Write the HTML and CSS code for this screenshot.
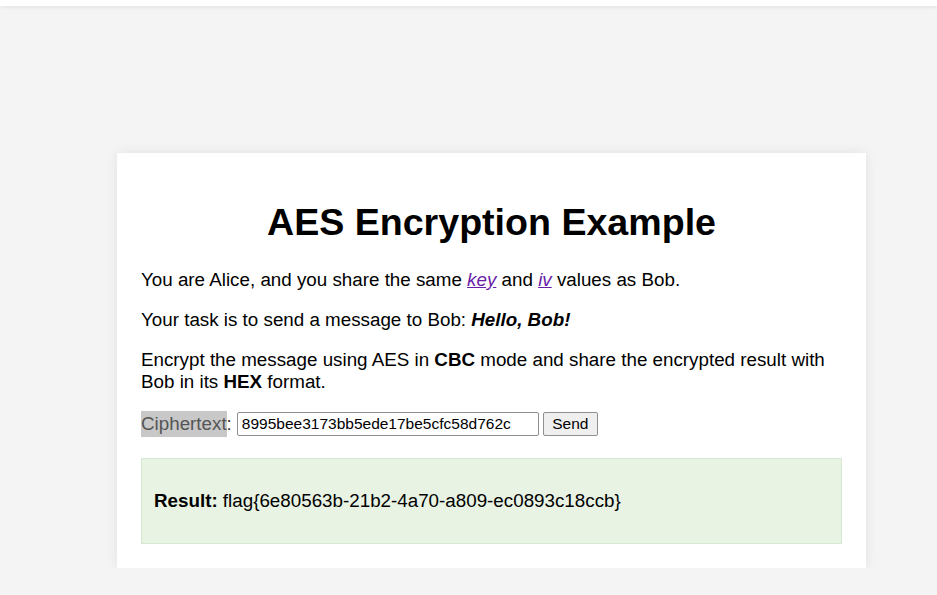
FILE: index.html
```html
<!DOCTYPE html>
<html lang="en">
<head>
    <meta charset="UTF-8">
    <meta name="viewport" content="width=device-width, initial-scale=1.0">
    <title>AES Encryption Example</title>
    <link rel="stylesheet" href="styles.css">
</head>
<body>
    <div class="topbar"></div>
    <div class="container">
        <h1>AES Encryption Example</h1>
        <p>You are Alice, and you share the same <a href="#" class="visited"><i>key</i></a> and <a href="#" class="visited"><i>iv</i></a> values as Bob.</p>
        <p>Your task is to send a message to Bob: <b><i>Hello, Bob!</i></b></p>
        <p>Encrypt the message using AES in <b>CBC</b> mode and share the encrypted result with Bob in its <b>HEX</b> format.</p>
        <form class="send-form" onsubmit="return false">
            <label for="ciphertext"><span class="hl">Ciphertext</span>:</label>
            <input type="text" id="ciphertext" value="8995bee3173bb5ede17be5cfc58d762c">
            <button type="submit">Send</button>
        </form>
        <div class="result">
            <p><b>Result:</b> flag{6e80563b-21b2-4a70-a809-ec0893c18ccb}</p>
        </div>
    </div>
</body>
</html>
```

FILE: styles.css
```css
body {
    font-family: "Liberation Sans", Arial, sans-serif;
    font-size: 18.8px;
    background: #f4f4f4;
    margin: 0;
    color: #000;
}
.topbar {
    height: 6px;
    background: #fff;
    box-shadow: 0 1px 4px rgba(0, 0, 0, 0.08);
}
.container {
    width: 749px;
    box-sizing: border-box;
    margin: 147px 0 0 117px;
    padding: 24px;
    background: #fff;
    box-shadow: 0 0 12px rgba(0, 0, 0, 0.08);
}
h1 {
    font-size: 37.6px;
    text-align: center;
    margin: 24px 0 25px;
}
p {
    margin: 18px 0;
    line-height: 22px;
}
a.visited {
    color: #681da8;
}
.send-form {
    display: flex;
    align-items: center;
    margin-top: 19px;
    margin-bottom: 22px;
}
.send-form label {
    color: #333;
    margin-right: 5px;
}
.hl {
    background: #c8c8c8;
    color: #555;
    padding: 2px 0 3px;
}
.send-form input {
    width: 302px;
    height: 24px;
    box-sizing: border-box;
    font-family: "Liberation Sans", Arial, sans-serif;
    font-size: 15.5px;
    padding: 1px 4px;
    border: 1px solid #8f8f8f;
    border-radius: 2px;
}
.send-form button {
    margin-left: 4px;
    height: 24px;
    width: 55px;
    font-family: "Liberation Sans", Arial, sans-serif;
    font-size: 15.5px;
    background: #efefef;
    border: 1px solid #8f8f8f;
    border-radius: 2px;
    padding: 0;
}
.result {
    background: #e8f3e4;
    border: 1px solid #d5e8d0;
    padding: 12px;
}
.result p {
    margin: 19px 0;
}
```
